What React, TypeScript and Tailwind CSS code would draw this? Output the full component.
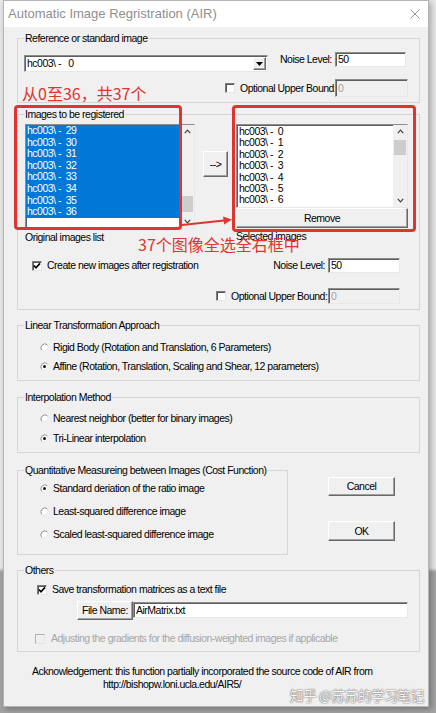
import React from 'react'

const sunken =
  'border border-t-[#8c8c8c] border-l-[#8c8c8c] border-r-[#e8e8e8] border-b-[#e8e8e8] shadow-[inset_1px_1px_0_#5e5e5e]'
const raised =
  'border border-t-white border-l-white border-r-[#696969] border-b-[#696969] shadow-[inset_-1px_-1px_0_#a0a0a0] bg-[#f0f0f0]'

const Check = ({ checked = false, disabled = false }: { checked?: boolean; disabled?: boolean }) => (
  <span
    className={`inline-flex w-[10px] h-[10px] shrink-0 items-center justify-center border border-t-[#7c7c7c] border-l-[#7c7c7c] border-r-[#e4e4e4] border-b-[#e4e4e4] ${
      disabled ? 'bg-[#f0f0f0] border-t-[#b0b0b0] border-l-[#b0b0b0]' : 'bg-white shadow-[inset_1px_1px_0_#555]'
    }`}
  >
    {checked && (
      <svg width="8" height="8" viewBox="0 0 8 8">
        <path d="M1 3.6 L3 5.8 L7 1.4" fill="none" stroke="#000" strokeWidth="1.7" />
      </svg>
    )}
  </span>
)

const Radio = ({ on = false }: { on?: boolean }) => (
  <svg width="9" height="9" viewBox="0 0 9 9" className="shrink-0">
    <circle cx="4.5" cy="4.5" r="4" fill="#fff" />
    <path d="M1.7 7.3 A4 4 0 0 1 7.3 1.7" fill="none" stroke="#8a8a8a" strokeWidth="1" />
    <path d="M7.3 1.7 A4 4 0 0 1 1.7 7.3" fill="none" stroke="#e2e2e2" strokeWidth="1" />
    {on && <circle cx="4.5" cy="4.5" r="1.5" fill="#111" />}
  </svg>
)

const Group = ({ title, className = '', children }: { title: string; className?: string; children: React.ReactNode }) => (
  <fieldset className={`border border-[#d6d6d6] ${className}`}>
    <legend className="ml-[6px] px-[1px] leading-[12px] whitespace-nowrap">{title}</legend>
    {children}
  </fieldset>
)

const Chevron = ({ up }: { up?: boolean }) => (
  <div className="h-[13px] flex items-center justify-center">
    <svg width="7" height="5" viewBox="0 0 7 5">
      <path d={up ? 'M0.8 4.2 L3.5 1.2 L6.2 4.2' : 'M0.8 0.8 L3.5 3.8 L6.2 0.8'} fill="none" stroke="#404040" strokeWidth="1.2" />
    </svg>
  </div>
)

const Scrollbar = ({ thumbTop, thumbH, w }: { thumbTop: number; thumbH: number; w: string }) => (
  <div className={`${w} shrink-0 bg-[#f0f0f0] flex flex-col`}>
    <Chevron up />
    <div className="flex-1">
      <div className="mx-[1px] bg-[#cdcdcd]" style={{ marginTop: thumbTop, height: thumbH }} />
    </div>
    <Chevron />
  </div>
)

const leftItems = [29, 30, 31, 32, 33, 34, 35, 36]
const rightItems = [0, 1, 2, 3, 4, 5, 6]

export default function App() {
  return (
    <div className="relative w-[436px] h-[713px] overflow-hidden whitespace-nowrap bg-[linear-gradient(to_bottom,#e8e8e8_0px,#e8e8e8_568px,#a3a3a3_572px)] text-[10.5px] leading-[13px] tracking-[-0.5px] text-black font-['Liberation_Sans',Arial,sans-serif]">
      <div className="ml-[3px] w-[426px] h-[707px] border border-[#b5b5b5] bg-[#f0f0f0] shadow-[2px_2px_6px_rgba(0,0,0,0.3)] flex flex-col">
        {/* title bar */}
        <div className="h-[26px] shrink-0 bg-white flex items-center justify-between pl-[4px] pr-[8px]">
          <span className="text-[13px] text-[#8f8f8f] leading-[16px] tracking-normal">Automatic Image Regristration (AIR)</span>
          <svg width="10" height="10" viewBox="0 0 10 10">
            <path d="M0.5 0.5 L9.5 9.5 M9.5 0.5 L0.5 9.5" stroke="#9a9a9a" strokeWidth="1" />
          </svg>
        </div>

        <div className="flex-1 pl-[13px] pr-[8px] flex flex-col">
          {/* Reference */}
          <Group title="Reference or standard image" className="mt-[5px] pb-[5px]">
            <div className="flex items-start mt-[8px] pl-[6px]">
              <div className={`mt-[3px] w-[244px] h-[17px] bg-white flex items-center ${sunken}`}>
                <span className="flex-1 pl-[2px] leading-[13px]">hc003\ -&nbsp;&nbsp; 0</span>
                <div className={`w-[13px] h-[13px] mr-[1px] flex items-center justify-center ${raised}`}>
                  <svg width="7" height="4" viewBox="0 0 7 4">
                    <path d="M0 0 H7 L3.5 4 Z" fill="#000" />
                  </svg>
                </div>
              </div>
              <span className="ml-[12px] w-[55px] leading-[15px]">Noise Level:</span>
              <div className={`w-[71px] h-[15px] bg-white pl-[2px] leading-[13px] ${sunken}`}>50</div>
            </div>
            <div className="flex items-center justify-end pr-[11px] mt-[7px]">
              <Check />
              <span className="ml-[5px] w-[95px]">Optional Upper Bound:</span>
              <div className={`w-[73px] h-[18px] bg-[#f0f0f0] pl-[2px] leading-[16px] text-[#a0a0a0] ${sunken}`}>0</div>
            </div>
          </Group>

          {/* Images */}
          <Group title="Images to be registered" className="mt-[5px] pb-[5px]">
            <div className="flex items-start mt-[4px] pl-[7px]">
              <div className="w-[170px]">
                <div className={`h-[105px] bg-white flex ${sunken}`}>
                  <div className="flex-1 flex flex-col">
                    {leftItems.map((n) => (
                      <div key={n} className="h-[11.6px] leading-[11.6px] bg-[#0078d7] text-white pl-[1px] whitespace-pre">
                        {`hc003\\ -  ${n}`}
                      </div>
                    ))}
                  </div>
                  <Scrollbar w="w-[13px]" thumbTop={58} thumbH={16} />
                </div>
                <div className="mt-[2px] leading-[13px]">Original images list</div>
              </div>

              <button className={`ml-[8px] mt-[27px] w-[25px] h-[26px] leading-[12px] ${raised}`}>--&gt;</button>

              <div className="ml-[8px] w-[172px]">
                <div className={`h-[84px] bg-white flex ${sunken}`}>
                  <div className="flex-1 flex flex-col pt-[1px]">
                    {rightItems.map((n) => (
                      <div key={n} className="h-[11.4px] leading-[11.4px] pl-[2px] whitespace-pre">
                        {`hc003\\ -  ${n}`}
                      </div>
                    ))}
                  </div>
                  <Scrollbar w="w-[14px]" thumbTop={2} thumbH={15} />
                </div>
                <button className={`block w-[172px] h-[20px] ${raised}`}>Remove</button>
                <div className="mt-[2px] leading-[13px]">Selected images</div>
              </div>
            </div>

            <div className="flex items-center mt-[14px] pl-[14px] pr-[19px]">
              <Check checked />
              <span className="ml-[5px] flex-1">Create new images after registration</span>
              <span className="mr-[3px]">Noise Level:</span>
              <div className={`w-[72px] h-[15px] bg-white pl-[2px] leading-[13px] ${sunken}`}>50</div>
            </div>
            <div className="flex items-center justify-end mt-[15px] pr-[19px]">
              <Check />
              <span className="ml-[5px] w-[97px]">Optional Upper Bound:</span>
              <div className={`w-[72px] h-[16px] bg-[#f0f0f0] pl-[2px] leading-[14px] text-[#a0a0a0] ${sunken}`}>0</div>
            </div>
          </Group>

          {/* Linear */}
          <Group title="Linear Transformation Approach" className="mt-[9px] pb-[7px]">
            <div className="flex flex-col gap-[6px] mt-[10px] pl-[22px]">
              <label className="flex items-center gap-[4px] h-[13px]">
                <Radio />
                <span>Rigid Body (Rotation and Translation, 6 Parameters)</span>
              </label>
              <label className="flex items-center gap-[4px] h-[13px]">
                <Radio on />
                <span>Affine (Rotation, Translation, Scaling and Shear, 12 parameters)</span>
              </label>
            </div>
          </Group>

          {/* Interpolation */}
          <Group title="Interpolation Method" className="mt-[10px] pb-[7px]">
            <div className="flex flex-col gap-[7px] mt-[9px] pl-[22px]">
              <label className="flex items-center gap-[4px] h-[13px]">
                <Radio />
                <span>Nearest neighbor (better for binary images)</span>
              </label>
              <label className="flex items-center gap-[4px] h-[13px]">
                <Radio on />
                <span>Tri-Linear interpolation</span>
              </label>
            </div>
          </Group>

          {/* Cost function + buttons */}
          <div className="flex items-start mt-[11px]">
            <Group title="Quantitative Measureing between Images (Cost Function)" className="w-[271px] pb-[13px]">
              <div className="flex flex-col gap-[10px] mt-[6px] pl-[22px]">
                <label className="flex items-center gap-[4px] h-[13px]">
                  <Radio on />
                  <span>Standard deriation of the ratio image</span>
                </label>
                <label className="flex items-center gap-[4px] h-[13px]">
                  <Radio />
                  <span>Least-squared difference image</span>
                </label>
                <label className="flex items-center gap-[4px] h-[13px]">
                  <Radio />
                  <span>Scaled least-squared difference image</span>
                </label>
              </div>
            </Group>
            <div className="ml-[40px] flex flex-col">
              <button className={`mt-[13px] w-[67px] h-[19px] ${raised}`}>Cancel</button>
              <button className={`mt-[25px] w-[67px] h-[20px] ${raised}`}>OK</button>
            </div>
          </div>

          {/* Others */}
          <Group title="Others" className="mt-[9px] pb-[6px]">
            <div className="flex items-center h-[13px] mt-[7px] pl-[19px]">
              <Check checked />
              <span className="ml-[5px]">Save transformation matrices as a text file</span>
            </div>
            <div className="flex items-start mt-[5px] pl-[59px]">
              <button className={`w-[56px] h-[19px] ${raised}`}>File Name:</button>
              <div className={`mt-[1px] w-[275px] h-[16px] bg-white pl-[2px] leading-[14px] ${sunken}`}>AirMatrix.txt</div>
            </div>
            <div className="flex items-center h-[13px] mt-[12px] pl-[17px]">
              <Check disabled />
              <span className="ml-[6px] text-[#a6a6a6]">Adjusting the gradients for the diffusion-weighted images if applicable</span>
            </div>
          </Group>

          {/* Acknowledgement */}
          <div className="mt-[13px] leading-[13px]">
            <div className="pl-[15px]">Acknowledgement: this function partially incorporated the source code of AIR from</div>
            <div className="pl-[86px]">http://bishopw.loni.ucla.edu/AIR5/</div>
          </div>
        </div>
      </div>

      {/* annotations drawn over the screenshot */}
      <div className="absolute left-[22px] top-[84px] text-[16px] leading-[18px] tracking-normal text-[#e0342e] font-['Noto_Sans_CJK_SC',sans-serif]">
        从0至36，共37个
      </div>
      <div className="absolute left-[14px] top-[105px] w-[168px] h-[125px] border-[3px] border-[#e0342e] rounded-[4px]" />
      <div className="absolute left-[232px] top-[105px] w-[184px] h-[127px] border-[3px] border-[#e0342e] rounded-[4px]" />
      <svg className="absolute left-[180px] top-[210px]" width="56" height="20" viewBox="0 0 56 20">
        <path d="M2 15 L44 10.5" stroke="#e0342e" strokeWidth="2.2" fill="none" />
        <path d="M52 9.6 L43 6.4 L44.2 14.4 Z" fill="#e0342e" />
      </svg>
      <div className="absolute left-[138px] top-[235px] text-[16px] leading-[18px] tracking-normal text-[#e0342e] font-['Noto_Sans_CJK_SC',sans-serif]">
        37个图像全选全右框中
      </div>
      <div className="absolute left-[290px] top-[686px] text-[13.5px] leading-[18px] tracking-[-0.3px] text-[#f6f6f6] [text-shadow:0_0_1px_#555,0_0_2px_#777] font-['Noto_Sans_CJK_SC',sans-serif]">
        知乎 @苏苏的学习笔记
      </div>
    </div>
  )
}
